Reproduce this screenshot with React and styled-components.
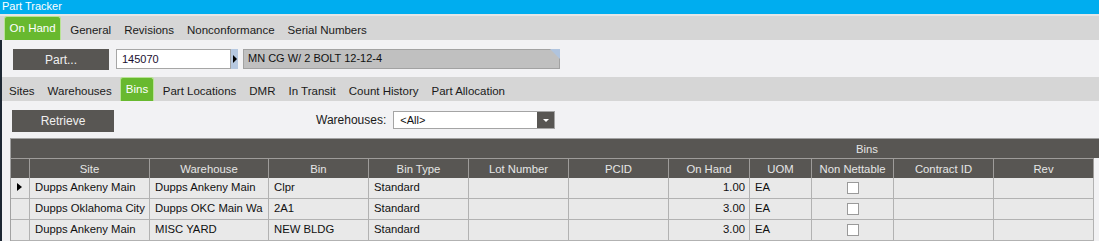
import React from 'react'
import styled, { createGlobalStyle } from 'styled-components'

const GlobalStyle = createGlobalStyle`
  html, body {
    margin: 0;
    background: #f2f2f4;
    overflow: hidden;
    font-family: "Liberation Sans", Arial, sans-serif;
  }
`

const columns = [
  { key: 'marker', title: '', width: 19 },
  { key: 'site', title: 'Site', width: 120 },
  { key: 'warehouse', title: 'Warehouse', width: 119 },
  { key: 'bin', title: 'Bin', width: 100 },
  { key: 'binType', title: 'Bin Type', width: 100 },
  { key: 'lot', title: 'Lot Number', width: 100 },
  { key: 'pcid', title: 'PCID', width: 100 },
  { key: 'onHand', title: 'On Hand', width: 81, align: 'right' },
  { key: 'uom', title: 'UOM', width: 62 },
  { key: 'nonNettable', title: 'Non Nettable', width: 82, check: true },
  { key: 'contract', title: 'Contract ID', width: 100 },
  { key: 'rev', title: 'Rev', width: 100 },
]

const rows = [
  { site: 'Dupps Ankeny Main', warehouse: 'Dupps Ankeny Main', bin: 'Clpr', binType: 'Standard', onHand: '1.00', uom: 'EA', current: true },
  { site: 'Dupps Oklahoma City', warehouse: 'Dupps OKC Main Wa', bin: '2A1', binType: 'Standard', onHand: '3.00', uom: 'EA' },
  { site: 'Dupps Ankeny Main', warehouse: 'MISC YARD', bin: 'NEW BLDG', binType: 'Standard', onHand: '3.00', uom: 'EA' },
]

const topTabs = ['On Hand', 'General', 'Revisions', 'Nonconformance', 'Serial Numbers']
const subTabs = ['Sites', 'Warehouses', 'Bins', 'Part Locations', 'DMR', 'In Transit', 'Count History', 'Part Allocation']

const App = () => {
  return (
    <>
      <GlobalStyle />
      <Window>
        <TitleBar>Part Tracker</TitleBar>

        <TabStrip top>
          {topTabs.map(tab => (
            <Tab key={tab} active={tab === 'On Hand'}>{tab}</Tab>
          ))}
        </TabStrip>

        <Body>
          <PartRow>
            <DarkButton width={96} height={21}>Part...</DarkButton>
            <PartInput>145070</PartInput>
            <LookupArrow />
            <Description>MN CG W/ 2 BOLT 12-12-4</Description>
          </PartRow>

          <TabStrip>
            {subTabs.map(tab => (
              <Tab key={tab} active={tab === 'Bins'}>{tab}</Tab>
            ))}
          </TabStrip>

          <FilterRow>
            <DarkButton width={102} height={22}>Retrieve</DarkButton>
            <FilterField>
              <FieldLabel>Warehouses:</FieldLabel>
              <Select>
                <SelectValue>&lt;All&gt;</SelectValue>
                <SelectButton />
              </Select>
            </FilterField>
          </FilterRow>

          <GridBox>
            <GroupHeader>Bins</GroupHeader>
            <Table>
              {columns.map(col => (
                <HeadCell key={col.key}>{col.title}</HeadCell>
              ))}
              {rows.map((row, i) => columns.map(col => {
                if (col.key === 'marker') {
                  return (
                    <MarkerCell key={`${i}-${col.key}`}>
                      {row.current && <RowPointer />}
                    </MarkerCell>
                  )
                }
                if (col.check) {
                  return (
                    <Cell key={`${i}-${col.key}`} align="center">
                      <CheckBox />
                    </Cell>
                  )
                }
                return (
                  <Cell key={`${i}-${col.key}`} align={col.align}>
                    {row[col.key] || ''}
                  </Cell>
                )
              }))}
            </Table>
          </GridBox>
        </Body>
      </Window>
    </>
  )
}

const gridTemplate = columns.map(c => `${c.width}px`).join(' ')

const Window = styled.div`
  width: 1099px;
  height: 241px;
  overflow: hidden;
  display: flex;
  flex-direction: column;
`

const TitleBar = styled.div`
  height: 14px;
  box-sizing: border-box;
  padding: 1px 0 0 2px;
  background: #00adef;
  color: #ffffff;
  font-size: 11px;
  line-height: 10px;
`

const TabStrip = styled.div`
  display: flex;
  height: 24px;
  flex-shrink: 0;
  padding-left: ${props => props.top ? '4px' : '0.5px'};
  background: #d6d6d6;
  border-top: ${props => props.top ? '2px solid #e6e6e6' : 'none'};
`

const Tab = styled.div`
  box-sizing: border-box;
  padding: ${props => props.active ? '4px 4.6px 0' : '7px 6.5px 0'};
  margin: ${props => props.active ? '0 2.5px 0 2px' : '0'};
  font-size: 11.5px;
  line-height: 14px;
  white-space: nowrap;
  color: ${props => props.active ? '#ffffff' : '#1a1a1a'};
  background: ${props => props.active ? '#68b92f' : 'transparent'};
  border: ${props => props.active ? '1px solid #b9e396' : 'none'};
  border-bottom: none;
  border-radius: ${props => props.active ? '3px 3px 0 0' : '0'};

  &:first-child {
    margin-left: 0;
  }
`

const Body = styled.div`
  flex: 1;
  display: flex;
  flex-direction: column;
  border-left: 2px solid #1d2733;
  background: #f2f2f4;
`

const PartRow = styled.div`
  display: flex;
  align-items: flex-start;
  height: 37px;
  box-sizing: border-box;
  padding: 9px 0 0 11px;
  flex-shrink: 0;
`

const DarkButton = styled.div`
  width: ${props => props.width}px;
  height: ${props => props.height}px;
  flex-shrink: 0;
  display: flex;
  align-items: center;
  justify-content: center;
  background: #585653;
  color: #f0f0f0;
  font-size: 12px;
`

const PartInput = styled.div`
  width: 115px;
  height: 20px;
  box-sizing: border-box;
  margin-left: 7px;
  padding: 3px 0 0 5px;
  background: #ffffff;
  border: 1px solid #a6a6a6;
  font-size: 11px;
  line-height: 13px;
  color: #1c1030;
`

const LookupArrow = styled.div`
  width: 7px;
  height: 20px;
  display: flex;
  align-items: center;
  justify-content: center;
  background: #b6c8e0;

  &::before {
    content: '';
    border-left: 4px solid #000000;
    border-top: 4px solid transparent;
    border-bottom: 4px solid transparent;
  }
`

const Description = styled.div`
  position: relative;
  width: 317px;
  height: 20px;
  box-sizing: border-box;
  margin-left: 5px;
  padding: 2px 0 0 4px;
  background: #c0c0c0;
  border: 1px solid #a2a2a2;
  font-size: 11px;
  line-height: 13px;
  color: #111111;

  &::after {
    content: '';
    position: absolute;
    top: -1px;
    right: -1px;
    border-top: 10px solid #b0c4de;
    border-left: 10px solid transparent;
  }
`

const FilterRow = styled.div`
  display: flex;
  align-items: flex-start;
  height: 37px;
  box-sizing: border-box;
  padding: 9px 0 0 10px;
  flex-shrink: 0;
`

const FilterField = styled.div`
  display: flex;
  align-items: center;
  margin: 1px 0 0 202px;
`

const FieldLabel = styled.span`
  font-size: 12px;
  color: #1a1a1a;
  white-space: nowrap;
`

const Select = styled.div`
  display: flex;
  width: 162px;
  height: 18px;
  box-sizing: border-box;
  margin-left: 7px;
  background: #ffffff;
  border: 1px solid #a4a4a4;
`

const SelectValue = styled.div`
  flex: 1;
  padding: 2px 0 0 6px;
  font-size: 11px;
  line-height: 13px;
  color: #111111;
`

const SelectButton = styled.div`
  width: 17px;
  display: flex;
  align-items: center;
  justify-content: center;
  background: #585653;

  &::before {
    content: '';
    border-top: 3px solid #ffffff;
    border-left: 3px solid transparent;
    border-right: 3px solid transparent;
  }
`

const GridBox = styled.div`
  margin-left: 8px;
  border-top: 1px solid #a2a2a2;
  border-left: 1px solid #a2a2a2;
  font-size: 11.3px;
`

const GroupHeader = styled.div`
  height: 19px;
  box-sizing: border-box;
  padding: 3px 0 0 845px;
  line-height: 14px;
  background: #585653;
  color: #e4e4e4;
`

const Table = styled.div`
  display: grid;
  grid-template-columns: ${gridTemplate};
  grid-auto-rows: 21px;
  grid-template-rows: 20px;
  width: max-content;
`

const HeadCell = styled.div`
  box-sizing: border-box;
  display: flex;
  align-items: center;
  justify-content: center;
  background: #585653;
  color: #e6e6e6;
  border-right: 1px solid #9e9c9a;
  border-top: 1px solid #9e9c9a;
  white-space: nowrap;
`

const Cell = styled.div`
  box-sizing: border-box;
  display: flex;
  justify-content: ${props => props.align === 'right' ? 'flex-end' : props.align === 'center' ? 'center' : 'flex-start'};
  align-items: flex-start;
  padding: 2px 4px 0 5px;
  line-height: 14px;
  background: #e9e9e9;
  color: #111111;
  border-right: 1px solid #b2b2b2;
  border-bottom: 1px solid #b2b2b2;
  white-space: nowrap;
  overflow: hidden;
`

const MarkerCell = styled(Cell)`
  padding: 5px 0 0 6px;
`

const RowPointer = styled.div`
  border-left: 5px solid #000000;
  border-top: 4px solid transparent;
  border-bottom: 4px solid transparent;
`

const CheckBox = styled.div`
  width: 12px;
  height: 12px;
  box-sizing: border-box;
  margin-top: 2px;
  background: #ffffff;
  border: 1px solid #9a9a9a;
`

export default App
